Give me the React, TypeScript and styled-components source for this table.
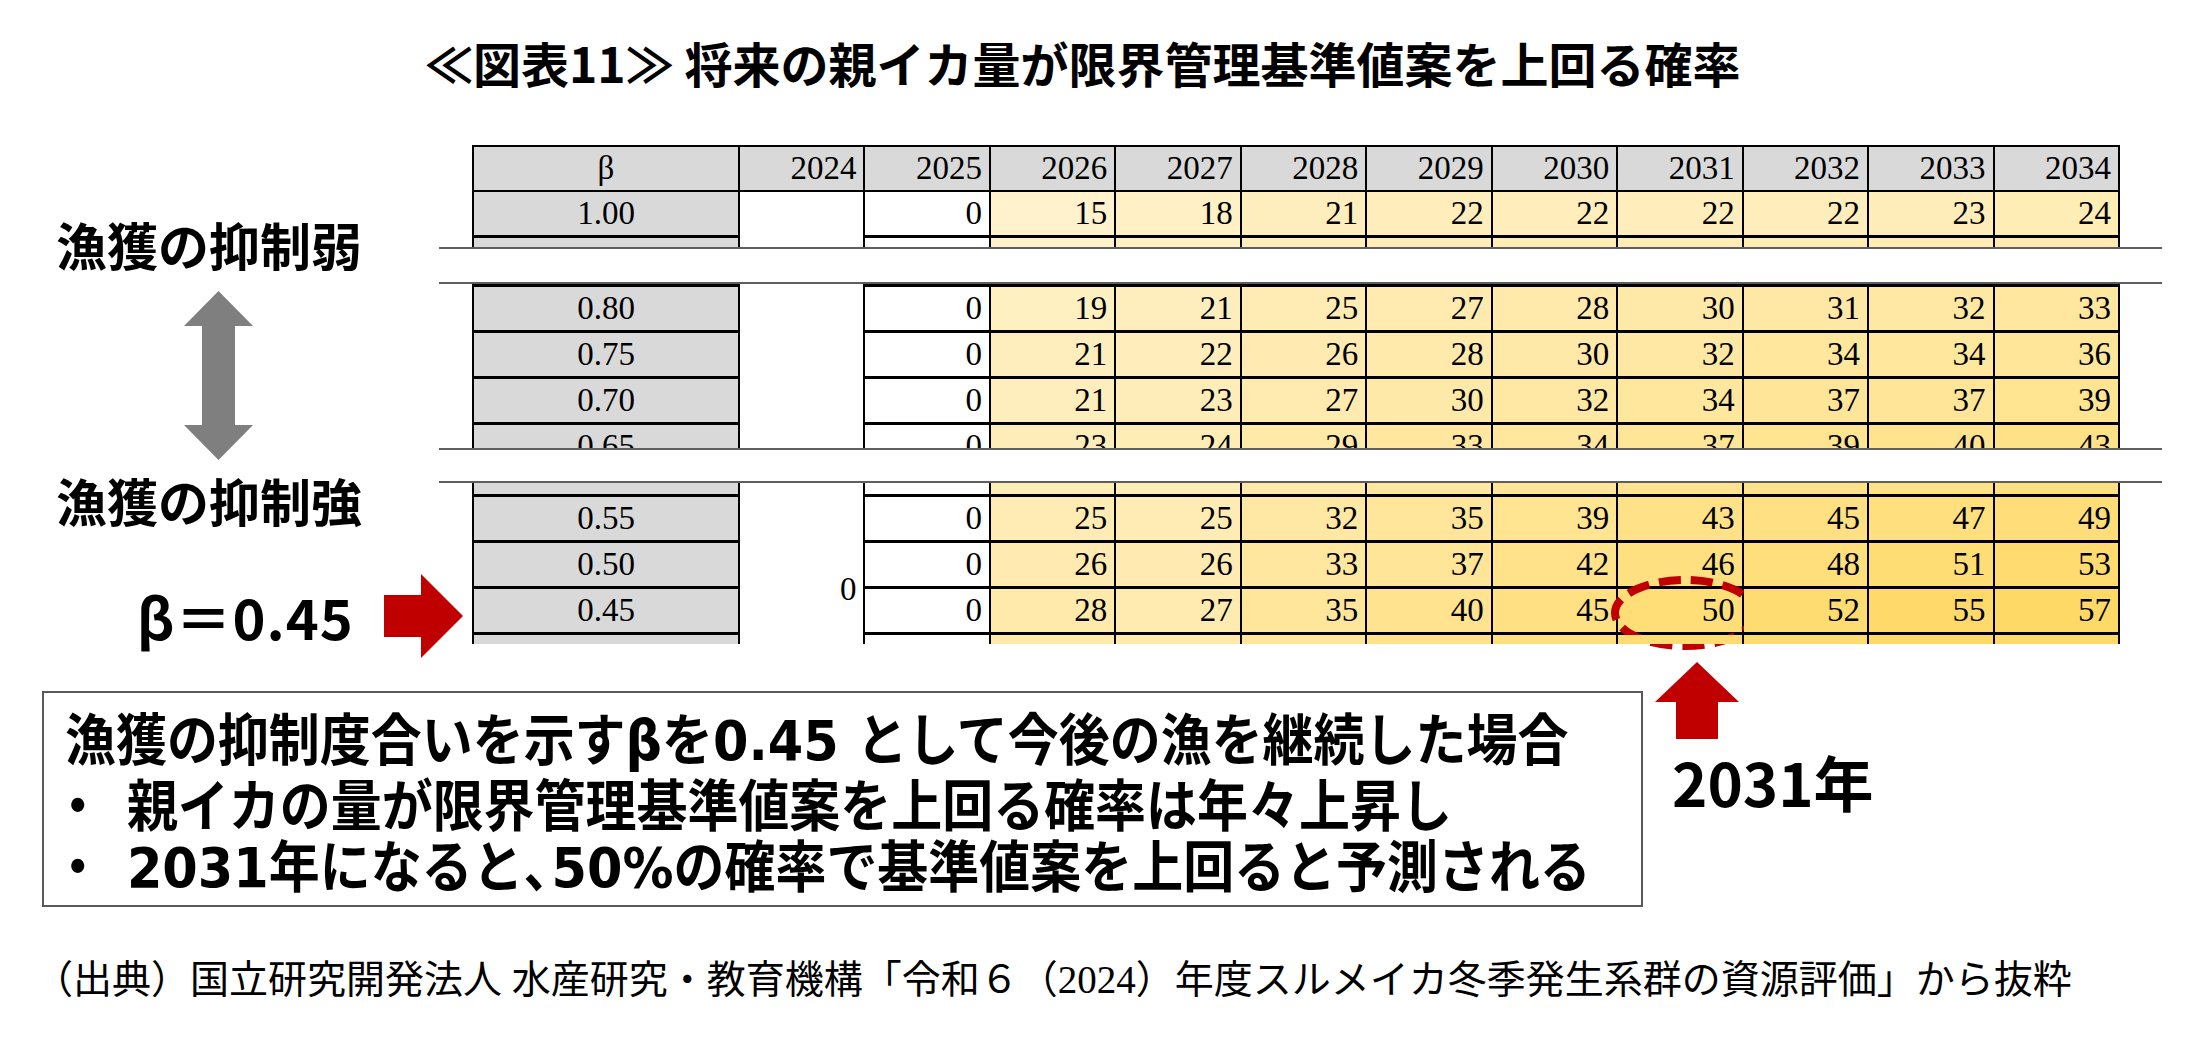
import React from "react";
import styled, { createGlobalStyle } from "styled-components";

const GlobalStyle = createGlobalStyle`
  html, body { margin: 0; padding: 0; background: #ffffff; }
  body {
    width: 2206px;
    height: 1043px;
    overflow: hidden;
    font-family: "Noto Sans CJK JP", sans-serif;
    color: #000;
  }
  * { box-sizing: border-box; }
`;

const Page = styled.div`
  width: 2206px;
  height: 1043px;
  display: flex;
  flex-direction: column;
  background: #fff;
`;

const Title = styled.h1`
  margin: 32px 0 0 0;
  padding-left: 425px;
  height: 60px;
  line-height: 60px;
  font-family: "Noto Sans CJK JP", sans-serif;
  font-size: 48px;
  font-weight: 700;
  white-space: nowrap;
`;

const Main = styled.div`
  display: flex;
  margin-top: 53px;
`;

const LeftPanel = styled.div`
  width: 472px;
  flex: none;
  display: flex;
  flex-direction: column;
`;

const ScaleLabel = styled.div<{ $top: number }>`
  margin-top: ${(p) => p.$top}px;
  padding-left: 56px;
  height: 60px;
  line-height: 60px;
  font-size: 51px;
  font-weight: 700;
  white-space: nowrap;
`;

const DoubleArrow = styled.svg`
  display: block;
  margin: 17px 0 0 184px;
  width: 69px;
  height: 169px;
`;

const BetaRow = styled.div`
  margin-top: 44px;
  height: 84px;
  display: flex;
  align-items: center;
  padding-left: 137px;
`;

const BetaText = styled.div`
  width: 247px;
  line-height: 84px;
  font-size: 56px;
  font-weight: 700;
  letter-spacing: 1px;
  white-space: nowrap;
`;

const RightArrow = styled.svg`
  display: block;
  width: 79px;
  height: 84px;
`;

const TableArea = styled.div`
  width: 1648px;
  flex: none;
  display: flex;
  flex-direction: column;
`;

const Slice = styled.div`
  border-left: 2px solid #000;
  display: flex;
  flex-direction: column;
`;

const Clip = styled.div<{ $h: number; $from: "top" | "bottom" }>`
  height: ${(p) => p.$h}px;
  flex: none;
  overflow: hidden;
  display: flex;
  flex-direction: column;
  justify-content: ${(p) => (p.$from === "top" ? "flex-start" : "flex-end")};
`;

const Row = styled.div<{ $header?: boolean }>`
  display: grid;
  grid-template-columns: 266px repeat(11, 1fr);
  flex: none;
  height: ${(p) => (p.$header ? 47 : 46)}px;
  border-top: ${(p) => (p.$header ? "2px solid #000" : "none")};
`;

const Cell = styled.div<{ $bg: string; $align: "center" | "right"; $bottom: number }>`
  position: relative;
  background: ${(p) => p.$bg};
  border-right: 2px solid #000;
  border-bottom: ${(p) => p.$bottom}px solid #000;
  display: flex;
  align-items: center;
  justify-content: ${(p) => (p.$align === "center" ? "center" : "flex-end")};
  padding-right: ${(p) => (p.$align === "center" ? 0 : 7)}px;
  font-family: "Liberation Serif", "Times New Roman", serif;
  font-size: 33px;
  line-height: 1;
  white-space: nowrap;
`;

const ZeroMark = styled.span`
  position: absolute;
  right: 7px;
  top: 0;
  transform: translateY(-50%);
  font-family: "Liberation Serif", serif;
  font-size: 33px;
  line-height: 1;
`;

const DashedRing = styled.svg`
  position: absolute;
  left: -9px;
  top: -14px;
  width: 152px;
  height: 76px;
  overflow: visible;
  pointer-events: none;
`;

const BreakBand = styled.div<{ $h: number }>`
  height: ${(p) => p.$h}px;
  flex: none;
  margin-left: -33px;
  width: 1723px;
  background: #fff;
  border-top: 2px solid #5e5e5e;
  border-bottom: 2px solid #5e5e5e;
`;

const Bottom = styled.div`
  display: flex;
  align-items: flex-start;
  margin-top: 4px;
`;

const NoteBox = styled.div`
  margin: 29px 0 0 42px;
  width: 1601px;
  height: 216px;
  flex: none;
  border: 2px solid #595959;
  padding: 17px 0 0 21px;
  overflow: hidden;
`;

const NoteLines = styled.div`
  width: 1700px;
  transform: scaleX(0.91);
  transform-origin: left top;
  font-family: "DejaVu Sans", "Noto Sans CJK JP", sans-serif;
  font-size: 56px;
  font-weight: 700;
  line-height: 61px;
  white-space: nowrap;
`;

const NoteLine = styled.div`
  height: 61px;
`;

const Bullet = styled.span`
  display: inline-block;
  width: 82px;
  margin-left: -14px;
  font-family: "Noto Sans CJK JP", sans-serif;
`;

const TightComma = styled.span`
  font-family: "Noto Sans CJK JP", sans-serif;
  margin-right: -0.45em;
`;

const Callout = styled.div`
  margin-left: 12px;
  display: flex;
  flex-direction: column;
`;

const UpArrow = styled.svg`
  display: block;
  width: 84px;
  height: 77px;
`;

const YearText = styled.div`
  margin: 7px 0 0 17px;
  font-size: 60px;
  font-weight: 700;
  line-height: 70px;
  white-space: nowrap;
`;

const Source = styled.p`
  margin: 48px 0 0 0;
  padding-left: 34px;
  font-family: "Liberation Serif", "Noto Sans CJK JP", serif;
  font-size: 39px;
  line-height: 50px;
  white-space: nowrap;
`;

const YEARS = [2024, 2025, 2026, 2027, 2028, 2029, 2030, 2031, 2032, 2033, 2034];

type DataRow = { beta: string; values: number[] };

const rows: Record<string, DataRow> = {
  r100: { beta: "1.00", values: [0, 15, 18, 21, 22, 22, 22, 22, 23, 24] },
  r095: { beta: "0.95", values: [0, 16, 19, 22, 23, 24, 24, 24, 25, 26] },
  r085: { beta: "0.85", values: [0, 18, 20, 24, 26, 27, 29, 30, 31, 32] },
  r080: { beta: "0.80", values: [0, 19, 21, 25, 27, 28, 30, 31, 32, 33] },
  r075: { beta: "0.75", values: [0, 21, 22, 26, 28, 30, 32, 34, 34, 36] },
  r070: { beta: "0.70", values: [0, 21, 23, 27, 30, 32, 34, 37, 37, 39] },
  r065: { beta: "0.65", values: [0, 23, 24, 29, 33, 34, 37, 39, 40, 43] },
  r060: { beta: "0.60", values: [0, 24, 24, 30, 33, 37, 40, 42, 44, 46] },
  r055: { beta: "0.55", values: [0, 25, 25, 32, 35, 39, 43, 45, 47, 49] },
  r050: { beta: "0.50", values: [0, 26, 26, 33, 37, 42, 46, 48, 51, 53] },
  r045: { beta: "0.45", values: [0, 28, 27, 35, 40, 45, 50, 52, 55, 57] },
  r040: { beta: "0.40", values: [0, 29, 29, 37, 42, 47, 52, 54, 57, 59] },
};

const shade = (v: number) => {
  const t = Math.max(0, Math.min(1, (v - 15) / 42));
  const g = Math.round(242 - 25 * t);
  const b = Math.round(204 - 102 * t);
  return `rgb(255, ${g}, ${b})`;
};

const HeaderRow: React.FC = () => (
  <Row $header>
    <Cell $bg="#d9d9d9" $align="center" $bottom={2}>
      β
    </Cell>
    {YEARS.map((y) => (
      <Cell key={y} $bg="#d9d9d9" $align="right" $bottom={2}>
        {y}
      </Cell>
    ))}
  </Row>
);

const BodyRow: React.FC<{ row: DataRow; highlight?: boolean }> = ({ row, highlight }) => (
  <Row>
    <Cell $bg="#d9d9d9" $align="center" $bottom={3}>
      {row.beta}
    </Cell>
    <Cell $bg="#ffffff" $align="right" $bottom={0}>
      {highlight && <ZeroMark>0</ZeroMark>}
    </Cell>
    {row.values.map((v, i) => (
      <Cell key={i} $bg={i === 0 ? "#ffffff" : shade(v)} $align="right" $bottom={3}>
        {v}
        {highlight && YEARS[i + 1] === 2031 && (
          <DashedRing viewBox="0 0 152 76">
            <ellipse
              cx="76"
              cy="38"
              rx="70"
              ry="33"
              fill="none"
              stroke="#c00000"
              strokeWidth="8"
              strokeDasharray="22 10"
            />
          </DashedRing>
        )}
      </Cell>
    ))}
  </Row>
);

const Partial: React.FC<{ row: DataRow; h: number; from: "top" | "bottom" }> = ({ row, h, from }) => (
  <Clip $h={h} $from={from}>
    <BodyRow row={row} />
  </Clip>
);

export default function App() {
  return (
    <Page>
      <GlobalStyle />
      <Title>≪図表11≫ 将来の親イカ量が限界管理基準値案を上回る確率</Title>
      <Main>
        <LeftPanel>
          <ScaleLabel $top={69}>漁獲の抑制弱</ScaleLabel>
          <DoubleArrow viewBox="0 0 69 169">
            <polygon
              points="34.5,0 69,35 51,35 51,134 69,134 34.5,169 0,134 18,134 18,35 0,35"
              fill="#7f7f7f"
            />
          </DoubleArrow>
          <ScaleLabel $top={10}>漁獲の抑制強</ScaleLabel>
          <BetaRow>
            <BetaText>β＝0.45</BetaText>
            <RightArrow viewBox="0 0 79 84">
              <polygon points="0,21 37,21 37,0 79,42 37,84 37,63 0,63" fill="#c00000" />
            </RightArrow>
          </BetaRow>
        </LeftPanel>
        <TableArea>
          <Slice>
            <HeaderRow />
            <BodyRow row={rows.r100} />
            <Partial row={rows.r095} h={9} from="top" />
          </Slice>
          <BreakBand $h={37} />
          <Slice>
            <Partial row={rows.r085} h={3} from="bottom" />
            <BodyRow row={rows.r080} />
            <BodyRow row={rows.r075} />
            <BodyRow row={rows.r070} />
            <Partial row={rows.r065} h={23} from="top" />
          </Slice>
          <BreakBand $h={35} />
          <Slice>
            <Partial row={rows.r060} h={14} from="bottom" />
            <BodyRow row={rows.r055} />
            <BodyRow row={rows.r050} />
            <BodyRow row={rows.r045} highlight />
            <Partial row={rows.r040} h={9} from="top" />
          </Slice>
        </TableArea>
      </Main>
      <Bottom>
        <NoteBox>
          <NoteLines>
            <NoteLine>漁獲の抑制度合いを示すβを0.45 として今後の漁を継続した場合</NoteLine>
            <NoteLine>
              <Bullet>・</Bullet>親イカの量が限界管理基準値案を上回る確率は年々上昇し
            </NoteLine>
            <NoteLine>
              <Bullet>・</Bullet>2031年になると<TightComma>、</TightComma>50%の確率で基準値案を上回ると予測される
            </NoteLine>
          </NoteLines>
        </NoteBox>
        <Callout>
          <UpArrow viewBox="0 0 84 77">
            <polygon points="42,0 84,40 63,40 63,77 21,77 21,40 0,40" fill="#c00000" />
          </UpArrow>
          <YearText>2031年</YearText>
        </Callout>
      </Bottom>
      <Source>（出典）国立研究開発法人 水産研究・教育機構「令和６（2024）年度スルメイカ冬季発生系群の資源評価」から抜粋</Source>
    </Page>
  );
}
